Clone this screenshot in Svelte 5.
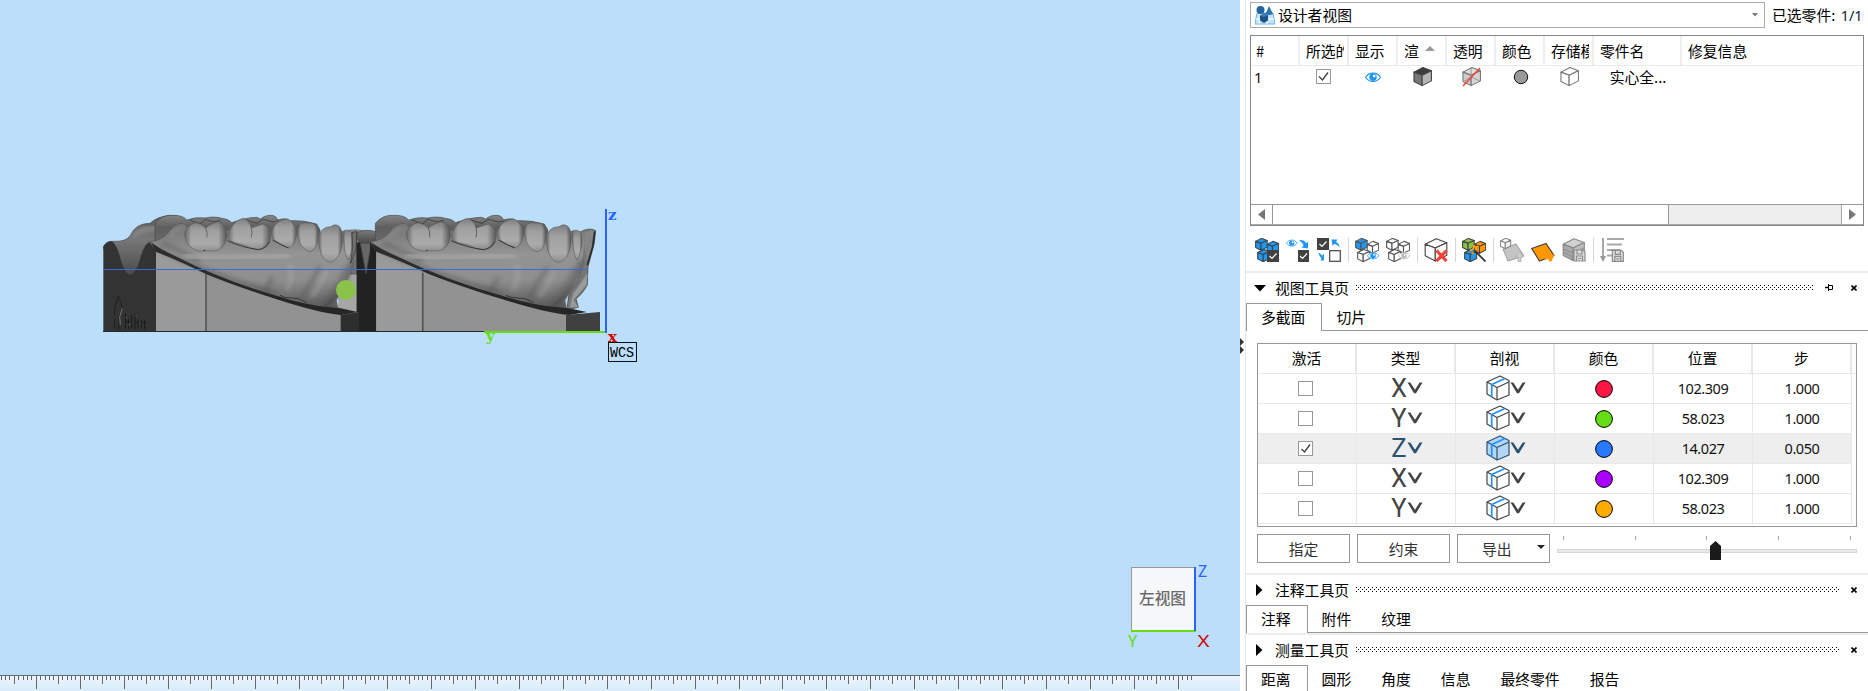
<script>
  const ticks = [];
  for (let i = -8; i <= 263; i++) {
    ticks.push({
      x: Math.floor(36.3 + i * 4.392),
      h: i % 10 === 0 ? 13 : i % 5 === 0 ? 8 : 4
    });
  }

  const partCols = [
    { name: '#', w: 49 },
    { name: '所选的', w: 49 },
    { name: '显示', w: 49 },
    { name: '渲', w: 49, sort: true },
    { name: '透明', w: 49 },
    { name: '颜色', w: 49 },
    { name: '存储模', w: 49 },
    { name: '零件名', w: 88 },
    { name: '修复信息', w: 181 }
  ];

  const sectionCols = ['激活', '类型', '剖视', '颜色', '位置', '步'];
  const rows = [
    { type: 'X', color: '#ff1744', pos: '102.309', step: '1.000' },
    { type: 'Y', color: '#64dd17', pos: '58.023', step: '1.000' },
    { type: 'Z', color: '#2979ff', pos: '14.027', step: '0.050', on: true },
    { type: 'X', color: '#aa00ff', pos: '102.309', step: '1.000' },
    { type: 'Y', color: '#ffab00', pos: '58.023', step: '1.000' }
  ];

  const teeth = [
    'M284,105 C286,84 300,72 318,68 Q336,72 347,84 Q362,70 385,65 Q409,72 410,98 C412,128 398,150 372,153 Q350,150 335,154 C305,152 288,132 284,105Z',
    'M412,112 C418,84 436,60 460,55 Q478,62 484,84 Q500,78 520,72 Q540,82 542,104 C542,130 530,148 505,149 C480,147 470,136 450,132 C430,128 418,122 412,112Z',
    'M544,100 C548,76 566,60 592,57 Q612,66 620,92 C622,112 612,138 598,143 C580,140 566,128 556,122 Q545,114 544,100Z',
    'M622,98 C622,78 632,66 650,68 L668,70 C684,78 688,100 684,118 C680,140 672,155 658,155 C640,150 626,130 622,98Z',
    'M686,115 C690,88 706,80 722,80 C742,66 756,80 757,110 C758,150 744,184 720,187 C696,182 686,150 686,115Z',
    'M762,92 C772,88 784,92 786,105 C790,140 782,170 774,180 C764,165 758,120 762,92Z'
  ];
</script>

{#snippet cube(x, y, s, top, left, right, stroke)}
  <g transform="translate({x} {y}) scale({s})" stroke={stroke} stroke-width={1.1 / s} stroke-linejoin="round">
    <path d="M.05 .27 .52 .03 .97 .2 .48 .43Z" fill={top} />
    <path d="M.05 .27 .48 .43 .48 .98 .05 .76Z" fill={left} />
    <path d="M.48 .43 .97 .2 .97 .73 .48 .98Z" fill={right} />
  </g>
{/snippet}

{#snippet trio(a, b, c, stroke)}
  {@render cube(11.5, 3, 12.5, b, b, b, stroke)}
  {@render cube(0, 0, 12.5, a, a, a, stroke)}
  {@render cube(2, 11, 13, c, c, c, stroke)}
{/snippet}

{#snippet eye(x, y, s, color)}
  <g transform="translate({x} {y}) scale({s})">
    <path d="M.5 5C4-.6 12-.6 15.500 5 12 10.600 4 10.600 .5 5Z" fill="#fff" stroke={color} stroke-width="1.1" />
    <circle cx="8" cy="5" r="3.700" fill={color} />
    <circle cx="9.200" cy="3.800" r="1.300" fill="#fff" />
  </g>
{/snippet}

{#snippet disk(x, y)}
  <path d="M{x} {y}h9l2 2v9h-11z" fill="#ddd" stroke="#8b8b8b" stroke-width="1.200" />
  <path d="M{x + 3} {y}v4h5v-4M{x + 2.500} {y + 11}v-5h6v5M{x + 4} {y + 8.500}h3" fill="none" stroke="#8b8b8b" stroke-width="1.200" />
{/snippet}

{#snippet chev()}
  <svg class="chev" viewBox="0 0 16 14"><path d="M.5 1.500H3.300L8 8.800 12.700 1.500H15.500L9 12.200H7Z" fill="currentColor" /></svg>
{/snippet}

{#snippet jaw(divider)}
  <path d="M195,70 Q215,45 245,46 Q280,45 290,60 Q320,50 345,54 Q375,48 395,55 Q415,56 425,68 Q470,52 500,52 L512,57 Q525,45 545,46 Q560,48 562,60 Q590,52 600,62 Q640,60 680,72 L690,90 L690,150 L195,130Z" fill="url(#back)" stroke="#4a4a4a" stroke-width="2" />
  <path d="M300,60 L330,72 L346,58 L372,66 L392,60 M430,70 L470,60 L500,70 L520,58 L548,66 L566,62" fill="none" stroke="#333" stroke-width="3" opacity=".7" />
  <path d="M198,152 L348,222 Q560,300 700,335 L752,345 V395 H198Z" fill="#9a9a9a" />
  <path d="M{divider},222 Q560,300 700,335 L752,345 V395 H{divider}Z" fill="#929292" />
  <path d="M{divider},218V394" stroke="#555" stroke-width="5" />
  <path d="M178,125 Q212,124 235,98 Q252,70 278,70 L300,90 L690,100 L760,92 L800,95 L788,180 L776,240 L740,300 L745,330 L700,330 Q560,300 348,222 Q270,180 198,152Z" fill="url(#gum)" />
  <path d="M178,125 Q212,124 235,98 Q252,70 278,70" fill="none" stroke="#555" stroke-width="2" />
  <path d="M240,110 Q255,84 285,80" fill="none" stroke="#a0a0a0" stroke-width="8" opacity=".5" filter="url(#soft)" />
  <path d="M215,130 Q250,140 330,185" fill="none" stroke="#606060" stroke-width="14" opacity=".6" filter="url(#soft)" />
  <path d="M280,165 Q330,180 480,170 Q540,170 600,165" fill="none" stroke="#a8a8a8" stroke-width="20" opacity=".7" filter="url(#soft)" />
  <path d="M690,200 Q660,250 630,300 M770,200 Q740,270 690,315 M545,230 Q540,260 520,275" fill="none" stroke="#555" stroke-width="12" opacity=".45" filter="url(#soft)" />
  <path d="M600,190 Q610,240 590,270 M710,210 Q690,260 665,290" fill="none" stroke="#a8a8a8" stroke-width="14" opacity=".5" filter="url(#soft)" />
  <path d="M785,180 Q775,260 705,320" fill="none" stroke="#303030" stroke-width="8" opacity=".7" filter="url(#soft)" />
  <path d="M182,126 Q205,145 255,168 Q400,242 560,287 Q640,314 720,322 L750,325 L802,336 L752,345 Q690,340 560,298 Q430,256 348,222 Q260,180 198,155Z" fill="#262626" />
  <path d="M195,142 Q320,210 560,280" fill="none" stroke="#444" stroke-width="8" opacity=".6" filter="url(#soft)" />
  {#each teeth as d}
    <path {d} fill="url(#tooth)" />
    <path {d} fill="url(#sides)" stroke="#505050" stroke-width="1.800" stroke-opacity=".8" />
  {/each}
  <path d="M347,84 Q353,96 351,112 M484,84 Q488,96 484,112" fill="none" stroke="#555" stroke-width="3" opacity=".8" />
  <path d="M412,122 Q455,142 505,149 Q528,145 538,125 M548,120 Q575,136 595,144 M570,286 L585,292 L625,296 L650,308" fill="none" stroke="#2b2b2b" stroke-width="2.500" />
  <circle cx="343" cy="151" r="2" fill="#111" />
{/snippet}

<div class="app">
  <main class="view">
    <svg class="scene" width="1240" height="675" viewBox="0 0 1240 675">
      <defs>
        <linearGradient id="gum" x1="0" y1="0" x2="0" y2="1">
          <stop offset="0" stop-color="#707070" /><stop offset=".35" stop-color="#949494" />
          <stop offset=".65" stop-color="#8e8e8e" /><stop offset="1" stop-color="#565656" />
        </linearGradient>
        <linearGradient id="back" x1="0" y1="0" x2="0" y2="1">
          <stop offset="0" stop-color="#858585" /><stop offset=".35" stop-color="#5e5e5e" /><stop offset="1" stop-color="#707070" />
        </linearGradient>
        <linearGradient id="mound" x1="0" y1="0" x2="0" y2="1">
          <stop offset="0" stop-color="#5c5c5c" /><stop offset=".4" stop-color="#777" /><stop offset="1" stop-color="#484848" />
        </linearGradient>
        <linearGradient id="tooth" x1="0" y1="0" x2="0" y2="1">
          <stop offset="0" stop-color="#7e7e7e" /><stop offset=".3" stop-color="#a0a0a0" />
          <stop offset=".75" stop-color="#ababab" /><stop offset="1" stop-color="#8e8e8e" />
        </linearGradient>
        <linearGradient id="sides">
          <stop offset="0" stop-color="#333" stop-opacity=".55" /><stop offset=".16" stop-color="#333" stop-opacity="0" />
          <stop offset=".8" stop-color="#333" stop-opacity="0" /><stop offset="1" stop-color="#333" stop-opacity=".7" />
        </linearGradient>
        <filter id="soft" x="-20%" y="-20%" width="140%" height="140%"><feGaussianBlur stdDeviation="7" /></filter>
      </defs>

      <g transform="translate(90 200) scale(.33333)">
        <path d="M770,90 Q800,84 830,92 Q850,92 860,100 L880,130 V395 H740 V330 L780,200Z" fill="#858585" />
        <path d="M745,290 L770,222 H800 V335 L745,322Z" fill="#a6a6a6" />
        <path d="M776,180 L800,95 V222 H776Z" fill="#777" stroke="#444" stroke-width="2" />
        <path d="M40,140 Q50,122 70,124 Q110,126 122,105 Q138,70 180,70 Q200,50 240,46 Q280,48 300,75 L240,150 L180,230 H60Z" fill="url(#mound)" stroke="#484848" stroke-width="2" />
        <path d="M130,110 Q160,75 235,88" fill="none" stroke="#8a8a8a" stroke-width="14" filter="url(#soft)" />
        <path d="M40,395 V140 Q50,124 65,124 Q78,130 90,170 Q103,220 120,224 Q138,222 150,178 Q162,130 180,125 L198,152 V395Z" fill="#333" />
        <path d="M85,288 L74,325 M86,290 L97,322 L86,352 M74,325V345 M74,358V388 M86,352V392" fill="none" stroke="#1c1c1c" stroke-width="2.500" />
        <path d="M97,325 L89,350 L91,374" fill="none" stroke="#777" stroke-width="3" />
        <path d="M106,340V388 M116,356V390 M125,345V385 M135,342V388 M144,358V388 M154,360V386 M164,360V388 M106,365H122 M137,368H170" fill="none" stroke="#1a1a1a" stroke-width="3" />
        <path d="M109,350V356 M118,370V378 M138,345V350 M150,366V372" stroke="#777" stroke-width="2" />
        {@render jaw(348)}
        <path d="M752,345 L807,336 V395 H752Z" fill="#2e2e2e" />
        <path d="M786,98 L800,94 L798,150 L782,190 L788,140Z" fill="#707070" stroke="#333" stroke-width="2" />
        <path d="M800,130 Q812,118 830,124 H858 V395 H807 V336 H800Z" fill="#222" />
      </g>

      <g transform="translate(360 200) scale(.33333)">
        <path d="M0,125 H35 L18,222Z" fill="#666" stroke="#444" stroke-width="2" />
        <path d="M-8,98 Q20,85 50,96 Q72,70 110,70 Q120,65 135,72 L120,130 H0 L-8,118Z" fill="url(#mound)" stroke="#484848" stroke-width="2" />
        <path d="M660,96 L675,90 Q695,84 707,92 L703,130 L684,200 L682,255 Q665,285 648,296 L655,322 L620,330 L640,200Z" fill="#797979" stroke="#333" stroke-width="2" />
        <path d="M683,220 L680,255 L640,300 L655,322 L630,322 L640,280Z" fill="#9a9a9a" />
      </g>
      <g transform="translate(307.45 200) scale(.3483 .33333)">
        {@render jaw(331)}
      </g>
      <g transform="translate(360 200) scale(.33333)">
        <path d="M618,345 L720,336 V395 H618Z" fill="#404040" />
        <path d="M675,98 Q690,88 704,94 L698,140 L684,185 L673,140Z" fill="#858585" />
        <path d="M704,94 L698,140 L682,195" fill="none" stroke="#2b2b2b" stroke-width="5" />
        <path d="M30,124 L46,152 V395 H30Z" fill="#222" />
      </g>

      <path d="M103 331.500H484" stroke="#222b33" />
      <path d="M104 269.500H587" stroke="#2f6fdd" />
      <circle cx="346" cy="290" r="10" fill="#8bc34a" />
      <path d="M484 332H605" stroke="#64dd17" stroke-width="2" />
      <path d="M606 209V333" stroke="#2962ff" stroke-width="2" />
      <g class="axis">
        <text x="608" y="220" fill="#2962ff">z</text>
        <text x="486" y="341" fill="#64dd17">y</text>
        <text x="608" y="342" fill="#d50000">x</text>
      </g>
      <rect x="608.500" y="342.500" width="28" height="19" fill="#bbdefb" stroke="#111" />
      <text class="wcs" x="610" y="357" textLength="24" lengthAdjust="spacingAndGlyphs">WCS</text>

      <rect x="1131.500" y="567.500" width="64" height="64" fill="#f5f7fa" stroke="#999" />
      <path d="M1131 631H1196" stroke="#64dd17" stroke-width="2" />
      <path d="M1195 567V631" stroke="#2962ff" stroke-width="2" />
      <text class="face" x="1139" y="604">左视图</text>
      <g class="nav">
        <text x="1198" y="577" fill="#2962ff">Z</text>
        <text x="1128" y="647" fill="#64dd17">Y</text>
        <text x="1197.500" y="647" fill="#d50000" textLength="12" lengthAdjust="spacingAndGlyphs">X</text>
      </g>
    </svg>
    <svg class="ruler" width="1240" height="16" shape-rendering="crispEdges">
      <path d="M0 .5H1240" stroke="#666c70" />
      {#each ticks as t}<rect x={t.x} y="1" width="1" height={t.h} fill="#666" />{/each}
    </svg>
  </main>

  <div class="split">
    <svg width="5" height="16" viewBox="0 0 5 16"><path d="M0 0 4 4 0 8ZM0 8 4 12 0 16Z" fill="#333" /></svg>
  </div>

  <aside class="panel">
    <div class="top">
      <div class="combo">
        <svg width="20" height="20" viewBox="0 0 20 20">
          <path d="M2 8H18L20 19H0Z" fill="#c5e3fb" stroke="#64b5f6" />
          <path d="M1 14H19M6 8 4 19M12 8V19" stroke="#fff" />
          <circle cx="5.500" cy="5" r="4" fill="#23639e" />
          <path d="M14 1 18 9Q14 11 10.500 9Z" fill="#3173ab" />
          <path d="M5 10.500 9.500 8 13 10V15.500L9 18 5 15.500Z" fill="#1b5288" />
          <path d="M5 10.500 9 12 13 10 9.500 8Z" fill="#3c80bb" />
        </svg>
        <span>设计者视图</span>
        <svg class="arrow" width="6" height="4"><path d="M0 0H6L3 3.500Z" fill="#777" /></svg>
      </div>
      <span class="count">已选零件: <b>1/1</b></span>
    </div>

    <div class="parts">
      <div class="phead">
        {#each partCols as c}
          <div class="ph" style:width="{c.w}px">
            <span>{c.name}</span>
            {#if c.sort}<svg width="10" height="5"><path d="M0 5H10L5 0Z" fill="#999" /></svg>{/if}
          </div>
        {/each}
      </div>
      <div class="prow">
        <div class="idx">1</div>
        <div class="pc"><span class="box"><svg viewBox="0 0 13 13"><path d="M2 6.500 5.500 10 11 2.500" /></svg></span></div>
        <div class="pc"><svg class="look" width="16" height="11">{@render eye(0, 0.3, 1, '#2196f3')}</svg></div>
        <div class="pc"><svg width="20" height="20">{@render cube(0, 0, 19, '#3c3c3c', '#777', '#b5b5b5', '#444')}</svg></div>
        <div class="pc"><svg width="20" height="20">
          {@render cube(0, 0, 19, '#ddd', '#ccc', '#d5d5d5', '#777')}
          <path d="M1 15 9 10V1M9 10 18 14" fill="none" stroke="#999" />
          <path d="M1 19 18 1" stroke="#f44336" stroke-width="1.500" />
        </svg></div>
        <div class="pc"><svg width="16" height="16"><circle cx="8" cy="8" r="6.700" fill="#999" stroke="#111" /></svg></div>
        <div class="pc"><svg width="20" height="20">{@render cube(0, 0, 19, '#fff', '#fff', '#fff', '#777')}</svg></div>
        <div class="pname">实心全...</div>
      </div>
      <div class="scroll">
        <div class="sb"><svg width="7" height="11"><path d="M7 0V11L0 5.500Z" fill="#777" /></svg></div>
        <div class="thumb"></div>
        <div class="track"></div>
        <div class="sb"><svg width="7" height="11"><path d="M0 0V11L7 5.500Z" fill="#777" /></svg></div>
      </div>
    </div>

    <div class="tools">
      <svg viewBox="0 0 24 24">{@render trio('#2196f3', '#2196f3', '#2196f3', '#37474f')}
        <rect x="12" y="12" width="12" height="12" fill="#424242" /><path d="M14.500 18 17 20.500 21.500 15.500" fill="none" stroke="#fff" stroke-width="1.200" /></svg>
      <svg viewBox="0 0 24 24">{@render eye(0, 1.5, 0.72, '#2196f3')}
        <path d="M13 2.500Q18 1 20 5L22 4V10.500L15.500 9.500 17.500 7.500Q16 4 13 2.500Z" fill="#2196f3" />
        <rect x="12" y="12" width="11" height="12" fill="#424242" /><path d="M14 18 16.500 20.500 21 15.500" fill="none" stroke="#fff" stroke-width="1.200" /></svg>
      <svg viewBox="0 0 24 24"><rect width="12" height="12" fill="#424242" /><path d="M2.500 6 5 8.500 9.500 3.500" fill="none" stroke="#fff" stroke-width="1.200" />
        <path d="M14.500 1.500H20.500L19 4Q22.500 5.500 22.500 9.500 20 6 17 6L15.500 8Z" fill="#2196f3" />
        <path d="M1.500 14.500Q3 15 5 17.500L7 16V22.500H9L3.500 22.500 4.500 20.500Q2 18 1.500 14.500Z" fill="#2196f3" />
        <rect x="12.700" y="12.700" width="10.600" height="10.600" fill="#fff" stroke="#424242" stroke-width="1.200" /></svg>
      <i></i>
      <svg viewBox="0 0 24 24">{@render trio('#2196f3', '#fff', '#fff', '#555')}{@render eye(12, 14, 0.75, '#2196f3')}</svg>
      <svg viewBox="0 0 24 24">{@render trio('#fff', '#fff', '#fff', '#555')}{@render eye(12, 14, 0.75, '#bbb')}</svg>
      <i></i>
      <svg viewBox="0 0 24 24">{@render cube(0, 0, 23.5, '#fafafa', '#fafafa', '#fafafa', '#444')}
        <path d="M12.500 12.500 22.500 23M22.500 12.500 12.500 23" stroke="#f44336" stroke-width="3.200" /></svg>
      <i></i>
      <svg viewBox="0 0 24 24">{@render trio('#8bc34a', '#ff9800', '#2196f3', '#444')}
        <path d="M13 13 23.500 23.500" stroke="#333" stroke-width="1.800" /><path d="M12 7v3M8 12h3M10 16l1.500-1.500M14.500 10l2-2" stroke="#ff9800" stroke-width="2" /></svg>
      <i></i>
      <svg viewBox="0 0 24 24"><path d="M3 11 16 6 24 18 8 23Z" fill="#c4c4c4" stroke="#999" />
        {@render cube(0, 0, 11, '#fff', '#fff', '#eee', '#888')}<path d="M18 24V19H15L19.500 14.500 24 19H21V24Z" fill="#ccc" stroke="#aaa" stroke-width=".7" /></svg>
      <svg viewBox="0 0 24 24"><path d="M.7 10.500 15 5.500 23 17.500 8.500 23Z" fill="#ff9800" stroke="#444" stroke-width="1.200" />
        <path d="M18 23.500V21.500L13 21 14.500 18.500 13 16.500 16.500 16 18 12.500 20 16 23.500 17 22 20 20.500 23.500Z" fill="#ff9800" /></svg>
      <svg viewBox="0 0 24 24">{@render cube(0, 0, 23, '#d0d0d0', '#aaa', '#bbb', '#8a8a8a')}<path d="M1 11 11 15 22 10M1 14 11 19" fill="none" stroke="#888" />{@render disk(12, 12)}</svg>
      <i></i>
      <svg viewBox="0 0 24 24"><path d="M3 0V19" stroke="#999" stroke-width="1.700" /><path d="M0 18H6L3 24Z" fill="#999" />
        <path d="M7 1H24M7 6.500H22M7 12H20M7 17.500H14" stroke="#aaa" stroke-width="1.800" />{@render disk(12.3, 12.3)}</svg>
    </div>

    <section>
      <div class="shead">
        <svg class="tri" width="12" height="12"><path d="M0 3H12L6 9.500Z" fill="#000" /></svg>
        <span>视图工具页</span><div class="dots"></div>
        <svg class="pin" width="8" height="7"><path d="M0 3.500H3" stroke="#000" stroke-width="1.500" /><path d="M3.500 0V7M3.500 1.500H7.500V5.500H3.500" fill="none" stroke="#000" /></svg>
        <svg class="x" width="6" height="6"><path d="M.5 .5 5.500 5.500M5.500 .5 .5 5.500" stroke="#000" stroke-width="1.600" /></svg>
      </div>
      <div class="tabs"><div class="tab on">多截面</div><div class="tab">切片</div></div>
      <div class="body">
        <div class="grid">
          <div class="grow head">{#each sectionCols as c}<div>{c}</div>{/each}</div>
          {#each rows as r}
            <div class="grow" class:sel={r.on}>
              <div><span class="box act">{#if r.on}<svg viewBox="0 0 13 13"><path d="M2.500 7 5.500 10 11 2.500" /></svg>{/if}</span></div>
              <div class="type"><span>{r.type}</span>{@render chev()}</div>
              <div class="clip">
                <svg width="24" height="26" viewBox="0 0 24 26" fill={r.on ? '#b3d6f5' : '#fff'} stroke={r.on ? '#2c5272' : '#444'} stroke-width="1.200" stroke-linejoin="round">
                  <path d="M1 7 14 1 23 5.500V20L11 25 1 19Z" /><path d="M1 7 11 12.500 23 7M11 12.500V25" />
                  <path d="M5.700 22V9.500L18.500 3.800" fill="none" stroke="#1e90ff" stroke-width="1.700" />
                </svg>{@render chev()}
              </div>
              <div><svg class="dot" width="18" height="18"><circle cx="9" cy="9" r="8.400" fill={r.color} stroke="#000" /></svg></div>
              <div class="num">{r.pos}</div>
              <div class="num">{r.step}</div>
            </div>
          {/each}
        </div>
        <div class="actions">
          <button>指定</button><button>约束</button>
          <button class="drop">导出<svg width="8" height="4"><path d="M0 0H8L4 4Z" fill="#222" /></svg></button>
          <svg class="slider" width="300" height="29" viewBox="0 0 300 29">
            {#each [6, 78, 149, 221, 293] as x}<rect {x} y="2" width="1" height="4" fill="#a5a59b" />{/each}
            <rect x=".5" y="15.500" width="299" height="3" fill="#e7eaea" stroke="#d6d6d6" />
            <path d="M153 12 158.500 7 164 12V26H153Z" fill="#1a1a1a" />
          </svg>
        </div>
      </div>
    </section>

    {#each [{ t: '注释工具页', tabs: ['注释', '附件', '纹理'] }, { t: '测量工具页', tabs: ['距离', '圆形', '角度', '信息', '最终零件', '报告'] }] as s}
      <section>
        <div class="shead">
          <svg class="tri" width="12" height="12"><path d="M2 0V12L8.500 6Z" fill="#000" /></svg>
          <span>{s.t}</span><div class="dots long"></div>
          <svg class="x" width="6" height="6"><path d="M.5 .5 5.500 5.500M5.500 .5 .5 5.500" stroke="#000" stroke-width="1.600" /></svg>
        </div>
        <div class="tabs">{#each s.tabs as t, i}<div class="tab" class:on={i === 0}>{t}</div>{/each}</div>
      </section>
    {/each}
  </aside>
</div>

<style>
  :global(body) { margin: 0; overflow: hidden; }
  .app { display: flex; width: 1868px; height: 691px; overflow: hidden; background: #fff; color: #000;
    font-family: "Noto Sans CJK SC", sans-serif; font-size: 14.800px; line-height: 20px; }
  .app * { box-sizing: border-box; }
  svg { display: block; flex: none; }
  .view { width: 1240px; flex: none; background: #bbdefb; }
  .ruler { background: linear-gradient(#edf6fe, #d8ebfb); }
  .axis { font: bold 15px "DejaVu Serif", serif; }
  .wcs { font: 14px "Liberation Mono", monospace; }
  .face { font-size: 15.700px; fill: #6b6b6b; font-weight: 500; }
  .nav { font: 16px "Noto Sans", sans-serif; }
  .split { width: 5px; flex: none; padding-top: 338px; }
  .panel { width: 623px; flex: none; border-left: 1px solid #e8e8e8; }
  .top { display: flex; height: 28px; padding: 2px 0 0 4px; }
  .combo { display: flex; align-items: center; width: 515px; height: 26px; border: 1px solid #aaa; padding: 0 6px 0 4px; }
  .combo span { margin-left: 3px; margin-top: -1px; }
  .arrow { margin-left: auto; }
  .count { margin: 3px 0 0 7px; white-space: nowrap; }
  .count b { font: 14.500px "Noto Sans", sans-serif; color: #0d1a33; margin-left: 2px; }
  .parts { margin: 7px 0 0 4px; width: 614px; height: 191px; border: 1px solid #828790; display: flex; flex-direction: column; }
  .phead { display: flex; height: 30px; border-bottom: 1px solid #eaeaea; }
  .ph { display: flex; align-items: center; padding: 0 5px 0 5px; border-right: 2px solid #eee; overflow: hidden; }
  .ph:last-child { border: 0; }
  .ph + .ph { padding-left: 6px; }
  .ph span { overflow: hidden; white-space: nowrap; flex: none; max-width: 38px; }
  .ph:nth-child(n+8) span { max-width: none; }
  .ph svg { margin: -5px 0 0 6px; }
  .prow { display: flex; height: 22px; align-items: center; }
  .prow > div { width: 49px; display: flex; justify-content: center; }
  .prow .idx { justify-content: flex-start; padding-left: 3px; color: #2b0b08; font-family: "Noto Sans", sans-serif; }
  .prow .pname { width: 88px; white-space: nowrap; }
  .look { margin-left: -2px; }
  .box { width: 15px; height: 15px; border: 1px solid #999; background: #fff; display: block; }
  .pc .box { margin-left: -3px; margin-top: -1px; }
  .box path { fill: none; stroke: #444; stroke-width: 1.400; }
  .scroll { display: flex; height: 21px; margin-top: auto; border-top: 1px solid #999; border-bottom: 1px solid #aaa; }
  .sb { width: 21px; display: flex; align-items: center; justify-content: center; }
  .thumb { width: 397px; border: solid #999; border-width: 0 1px; }
  .track { flex: 1; background: #ededed; border-right: 1px solid #aaa; }
  .tools { display: flex; align-items: center; height: 45px; padding: 2px 0 0 9px; gap: 7px; }
  .tools svg { width: 24px; height: 24px; }
  .tools i { width: 1px; height: 24px; background: #d5d5d5; margin: 0 -.5px; }
  section { border-top: 2px solid #eee; }
  .shead { display: flex; align-items: center; height: 30px; padding: 0 0 1px 8px; }
  .shead span { margin-left: 9px; width: 81px; white-space: nowrap; }
  .tri { margin-left: 0; }
  .dots { width: 458px; height: 5px;
    background: conic-gradient(from 270deg at 1px 1px, #000 90deg, transparent 0) 0 0 / 4px 4px,
      conic-gradient(from 270deg at 1px 1px, #000 90deg, transparent 0) 2px 2px / 4px 4px; }
  .dots.long { width: 484px; }
  .pin { margin-left: 11px; }
  .x { margin-left: 18px; }
  .dots.long + .x { margin-left: 11px; }
  .tabs { display: flex; height: 28px; }
  .tabs::after { content: ""; flex: 1; border-bottom: 1px solid #999; }
  .tab { padding: 4px 15px 0; border-bottom: 1px solid #999; white-space: nowrap; }
  .tab + .tab { margin-left: -1px; padding-right: 16px; }
  .tab.on { border: 1px solid #999; border-bottom: 0; padding: 3px 16px 0 14px; }
  .body { padding: 12px 0 0 11px; height: 242px; }
  .grid { width: 600px; height: 184px; border: 1px solid #999; }
  .grow { display: flex; height: 30px; width: 594px; border-bottom: 1px solid #e8e8e8; }
  .grow > div { width: 99px; display: flex; align-items: center; justify-content: center; border-right: 1px solid #e8e8e8; padding-bottom: 1px; }
  .grow.head { width: 598px; }
  .grow.head > div { border-right-width: 2px; }
  .sel { background: #eee; color: #2c5272; }
  .type, .clip { color: #444; }
  .sel .type, .sel .clip { color: #2c5272; }
  .type span { font: 500 25.500px/28px Roboto, sans-serif; font-weight: 400; width: 16px; height: 28px; display: flex; justify-content: center; }
  .grow .type { padding-left: 2px; }
  .chev { width: 16px; height: 14px; }
  .clip { padding-left: 1px; }
  .act { margin: 1px 0 0 -4px; }
  .dot { margin-top: 2px; }
  .num { font: 14.500px "Noto Sans", sans-serif; letter-spacing: -.45px; color: #111; }
  .actions { display: flex; margin-top: 7px; gap: 7px; }
  button { width: 93px; height: 29px; padding: 0; border: 1px solid #999; background: #fff; color: #333; font: inherit; display: flex; align-items: center; justify-content: center; }
  .drop { justify-content: flex-start; padding-left: 24px; }
  .drop svg { margin: -3px 0 0 25px; }
</style>
